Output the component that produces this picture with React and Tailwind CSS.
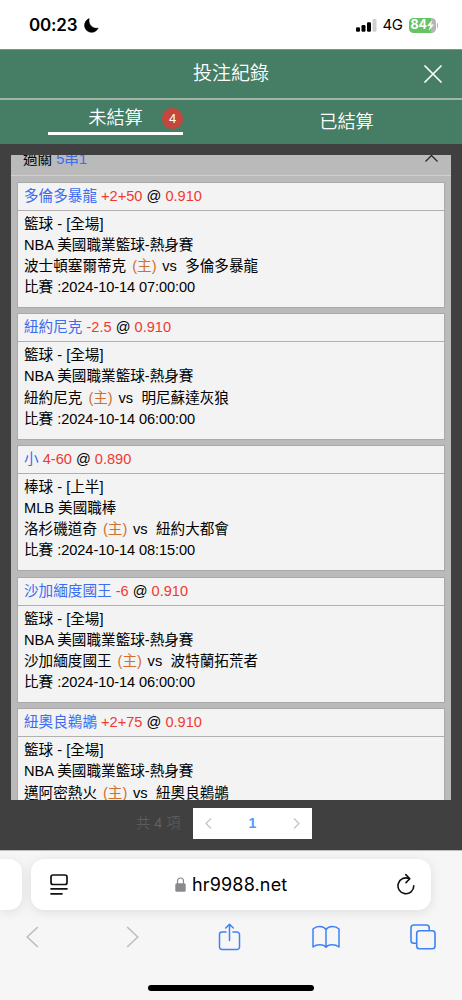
import React, { useState } from 'react';

const bets = [
  { pick: '多倫多暴龍', line: '+2+50', odds: '0.910', sport: '籃球 - [全場]', league: 'NBA 美國職業籃球-熱身賽', home: '波士頓塞爾蒂克', away: '多倫多暴龍', time: '2024-10-14 07:00:00' },
  { pick: '紐約尼克', line: '-2.5', odds: '0.910', sport: '籃球 - [全場]', league: 'NBA 美國職業籃球-熱身賽', home: '紐約尼克', away: '明尼蘇達灰狼', time: '2024-10-14 06:00:00' },
  { pick: '小', line: '4-60', odds: '0.890', sport: '棒球 - [上半]', league: 'MLB 美國職棒', home: '洛杉磯道奇', away: '紐約大都會', time: '2024-10-14 08:15:00' },
  { pick: '沙加緬度國王', line: '-6', odds: '0.910', sport: '籃球 - [全場]', league: 'NBA 美國職業籃球-熱身賽', home: '沙加緬度國王', away: '波特蘭拓荒者', time: '2024-10-14 06:00:00' },
  { pick: '紐奧良鵜鶘', line: '+2+75', odds: '0.910', sport: '籃球 - [全場]', league: 'NBA 美國職業籃球-熱身賽', home: '邁阿密熱火', away: '紐奧良鵜鶘', time: '' },
];

const StatusBar = () => (
  <div className="h-[49px] bg-white flex items-center justify-between pl-[29px] pr-[24px] pt-[2px] font-['Inter','Liberation_Sans',sans-serif] text-black">
    <div className="flex items-center">
      <span className="w-[55px] text-[17px] font-semibold whitespace-nowrap tracking-[-0.2px]">00:23</span>
      <svg className="w-[15px] h-[15px] -mt-[1px]" viewBox="0 0 15 15">
        <path d="M5.2 .6A7.1 7.1 0 1 0 14.2 10C9.600 11.500 3.800 7 5.200 .6Z" fill="black" stroke="black" strokeWidth="0.500" strokeLinejoin="round" />
      </svg>
    </div>
    <div className="flex items-center">
      <svg className="w-[21px] h-[13px]" viewBox="0 0 21 13">
        <rect x="0" y="8.300" width="4" height="4.500" rx="1.200" />
        <rect x="5.500" y="6" width="4" height="6.800" rx="1.200" />
        <rect x="11" y="3.200" width="4" height="9.600" rx="1.200" />
        <rect x="16.500" y="0" width="4" height="12.800" rx="1.200" fill="#cfcfcf" />
      </svg>
      <span className="w-[26px] ml-[6px] text-[15px] tracking-[-0.4px]">4G</span>
      <div className="flex items-center">
        <div className="w-[27px] h-[15px] rounded-[4.5px] flex items-center pl-[2px] text-white bg-[linear-gradient(90deg,#65c466_82%,#b5b5b5_82%)]">
          <span className="text-[12.5px] font-bold leading-none tracking-[-0.2px]">84</span>
          <svg className="w-[7px] h-[11px]" viewBox="0 0 7 11">
            <path d="M5.200 0 0 6H3L1.800 11 7 4.600H4Z" fill="white" />
          </svg>
        </div>
        <div className="w-[1.5px] h-[5px] ml-px rounded-r bg-[#b5b5b5]"></div>
      </div>
    </div>
  </div>
);

const BetCard = ({ bet }) => (
  <div className="h-[126.500px] shrink-0 bg-[#f3f3f3] border border-[#a9a9a9]">
    <div className="h-[28px] pl-[6px] border-b border-[#b0b0b0] leading-[27px] whitespace-pre">
      <span className="text-[#3c6cf0]">{bet.pick}</span>
      <span className="text-[#ef3a30]"> {bet.line}</span>
      <span> @ </span>
      <span className="text-[#ef3a30]">{bet.odds}</span>
    </div>
    <div className="pl-[6px] pt-[3px] leading-[21.200px] whitespace-pre">
      <p>{bet.sport}</p>
      <p>{bet.league}</p>
      <p className="flex">
        <span>{bet.home}</span>
        <span className="ml-[6px] w-[25px] text-[#d0702e]">(主)</span>
        <span className="ml-[5px] w-[23px]">vs</span>
        <span>{bet.away}</span>
      </p>
      {bet.time && <p>比賽 :<span className="tracking-[-0.1px]">{bet.time}</span></p>}
    </div>
  </div>
);

const SafariBar = () => (
  <div className="h-[150px] shrink-0 bg-[#f6f6f7] border-t border-[#bdbdbd] overflow-hidden">
    <div className="flex h-[51px] mt-[8px] gap-[9px]">
      <div className="w-[22px] rounded-r-[13px] bg-white shadow-[0_2px_12px_rgba(0,0,0,0.1)]"></div>
      <div className="w-[400px] rounded-[13px] bg-white shadow-[0_2px_12px_rgba(0,0,0,0.1)] flex items-center pl-[19px] pr-[15px]">
        <svg className="w-[18px] h-[21px]" viewBox="0 0 18 21" fill="none" stroke="#111" strokeWidth="1.700" strokeLinecap="round">
          <rect x="1" y="1" width="16" height="9.500" rx="2" />
          <path d="M1 14.800H17M1 19.800H12" />
        </svg>
        <div className="flex items-center ml-[107px]">
          <svg className="w-[11px] h-[15px] mr-[6px]" viewBox="0 0 11 15">
            <path d="M2.500 7V4a3 3 0 0 1 6 0V7" fill="none" stroke="#8a8a8e" strokeWidth="1.200" />
            <rect x="0.300" y="6.300" width="10.400" height="8.500" rx="1.500" fill="#8a8a8e" />
          </svg>
          <span className="w-[96px] font-['Inter','Liberation_Sans',sans-serif] text-[18px] text-black tracking-[0.150px] whitespace-nowrap">hr9988.net</span>
        </div>
        <svg className="w-[18px] h-[22px] ml-auto -mt-[2px] mr-[1px]" viewBox="0 0 18 22" fill="none" stroke="#111" strokeWidth="1.600" strokeLinecap="round" strokeLinejoin="round">
          <path d="M16.800 12.800A7.900 7.900 0 1 1 12.300 5.700" />
          <path d="M8.800 1.600 12.800 5.700 9 9.600" />
        </svg>
      </div>
    </div>
    <div className="flex items-center h-[28px] mt-[13px] pl-[26px]">
      <svg className="w-[13px] h-[22px] mr-[87px]" viewBox="0 0 13 22" fill="none" stroke="#bebec0" strokeWidth="1.700" strokeLinecap="round" strokeLinejoin="round">
        <path d="M11.300 1.500 1.200 11 11.300 20.500" />
      </svg>
      <svg className="w-[13px] h-[22px] mr-[79px]" viewBox="0 0 13 22" fill="none" stroke="#bebec0" strokeWidth="1.700" strokeLinecap="round" strokeLinejoin="round">
        <path d="M1.700 1.500 11.800 11 1.700 20.500" />
      </svg>
      <svg className="w-[23px] h-[28px] mr-[71px]" viewBox="0 0 22 28" fill="none" stroke="#3e82f7" strokeWidth="1.500" strokeLinecap="round" strokeLinejoin="round">
        <path d="M7.500 9H3.500A2.500 2.500 0 0 0 1 11.500V24A2.500 2.500 0 0 0 3.500 26.500H18.500A2.500 2.500 0 0 0 21 24V11.500A2.500 2.500 0 0 0 18.500 9H14.500" />
        <path d="M11 17.500V1.500M7.200 5 11 1.200 14.800 5" />
      </svg>
      <svg className="w-[28px] h-[24px] mr-[70px]" viewBox="0 0 28 24" fill="none" stroke="#3e82f7" strokeWidth="1.500" strokeLinecap="round" strokeLinejoin="round">
        <path d="M14 4.500C11.500 .5 4.500 .5 1 4V22C4.500 19.200 11.500 18.800 14 22.200 16.500 18.800 23.500 19.200 27 22V4C23.500 .5 16.500 .5 14 4.500ZM14 4.500V22" />
      </svg>
      <svg className="w-[26px] h-[26px]" viewBox="0 0 26 26" fill="none" stroke="#3e82f7" strokeWidth="1.600">
        <path d="M6.500 19.300H3.700A2.700 2.700 0 0 1 1 16.600V3.700A2.700 2.700 0 0 1 3.700 1H16.500A2.700 2.700 0 0 1 19.200 3.700V6.500" />
        <rect x="6.700" y="6.700" width="18.300" height="18" rx="2.700" />
      </svg>
    </div>
    <div className="w-[166px] h-[5.500px] rounded-full bg-black mx-auto mt-[34px]"></div>
  </div>
);

const App = () => {
  const [tab, setTab] = useState('open');

  return (
    <div className="w-[462px] h-[1000px] flex flex-col overflow-hidden bg-[#404040] text-black font-['Liberation_Sans','Noto_Sans_CJK_TC',sans-serif]">
      <StatusBar />

      {/* Title */}
      <div className="h-[49px] shrink-0 bg-[#467e65] grid grid-cols-[1fr_auto_1fr] items-center text-white border-t border-[#719984]">
        <span></span>
        <h1 className="text-[19px] font-[350]">投注紀錄</h1>
        <button className="justify-self-end mr-[20px] -mt-[1px]">
          <svg className="w-[18px] h-[18px]" viewBox="0 0 18 18" stroke="white" strokeWidth="1.700" strokeLinecap="round">
            <path d="M1 1 17 17M17 1 1 17" />
          </svg>
        </button>
      </div>

      {/* Tabs */}
      <div className="h-[46px] shrink-0 bg-[#467e65] border-t-2 border-[#a4b4aa] flex text-white text-[18.200px] font-[350]">
        <button className="w-1/2 flex flex-col items-center" onClick={() => setTab('open')}>
          <span className="relative leading-[36px] h-[32px]">
            未結算
            <span className="absolute left-[74px] top-[8px] w-[21px] h-[21px] rounded-full bg-[#c4463c] text-[13px] leading-[21px] text-center">4</span>
          </span>
          {tab === 'open' && <span className="w-[135px] h-[3px] bg-white"></span>}
        </button>
        <button className="w-1/2 leading-[40px]" onClick={() => setTab('settled')}>已結算</button>
      </div>

      {/* Scrolled list of the parlay's legs */}
      <div className="h-[645px] w-[440px] mt-[11px] mx-auto shrink-0 overflow-hidden bg-[#bababa] text-[14.600px]">
        <div className="h-[21px] border-b border-[#d0d0d0] flex justify-between items-start pl-[12px] pr-[13px]">
          <p className="-mt-[7px] leading-[22px] whitespace-pre">過關 <span className="text-[#3c6cf0]">5串1</span></p>
          <svg className="w-[13px] h-[7px]" viewBox="0 0 13 7" fill="none" stroke="#222" strokeWidth="1.200">
            <path d="M.5 6.500 6.500 .5 12.500 6.500" />
          </svg>
        </div>
        <div className="flex flex-col gap-[5.200px] px-[6px] pt-[5.500px]">
          {bets.map((bet) => (
            <BetCard key={bet.pick} bet={bet} />
          ))}
        </div>
      </div>

      {/* Pagination */}
      <div className="flex h-[50px] shrink-0 items-start pt-[8px] pl-[136px]">
        <span className="w-[57px] text-[14.300px] leading-[31px] text-[#606266] font-light whitespace-nowrap">共 4 項</span>
        <div className="w-[119px] h-[31px] bg-white flex items-center justify-between px-[12px]">
          <svg className="w-[7px] h-[11px]" viewBox="0 0 7 11" fill="none" stroke="#c0c4cc" strokeWidth="1.300"><path d="M6 .5 1 5.500 6 10.500" /></svg>
          <span className="text-[14px] font-bold text-[#539bff]">1</span>
          <svg className="w-[7px] h-[11px]" viewBox="0 0 7 11" fill="none" stroke="#c0c4cc" strokeWidth="1.300"><path d="M1 .5 6 5.500 1 10.500" /></svg>
        </div>
      </div>

      <SafariBar />
    </div>
  );
};

export default App;
